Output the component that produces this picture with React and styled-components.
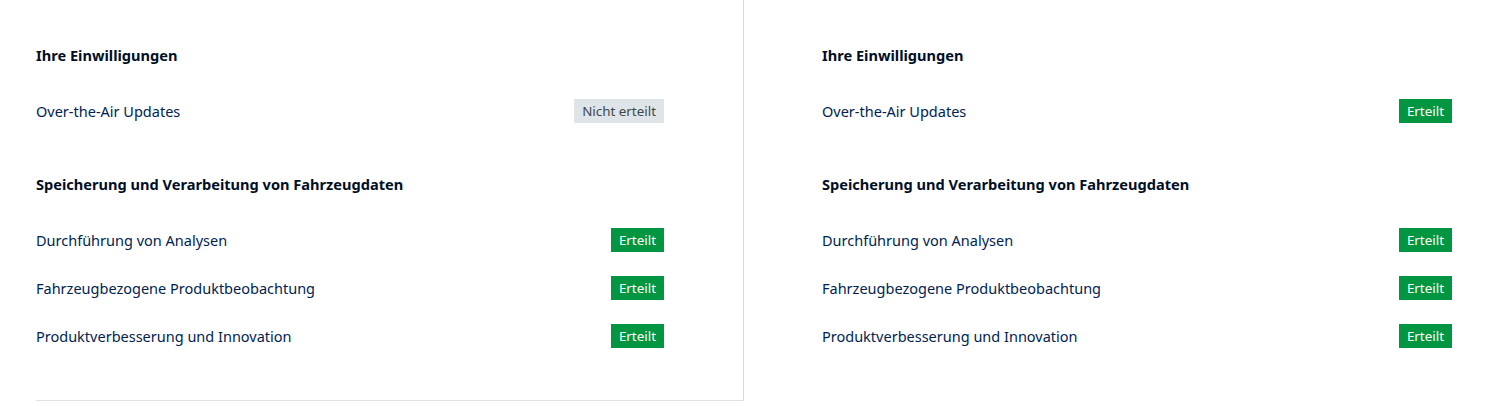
import styled, { createGlobalStyle } from 'styled-components';

const GlobalStyle = createGlobalStyle`
    body {
        margin: 0;
        background: #ffffff;
        font-family: "Noto Sans", "Open Sans", sans-serif;
        color: #001e50;
    }
`

const Page = styled.div`
    display: grid;
    grid-template-columns: 708px 708px;
    padding-left: 36px;
    height: 406px;
    box-sizing: border-box;
`

const Column = styled.div`
    padding: 39px ${props => props.$right ? '0' : '79px'} 0 ${props => props.$right ? '78px' : '0'};
    height: ${props => props.$right ? 'auto' : '401px'};
    box-sizing: border-box;
    border-right: ${props => props.$right ? 'none' : '1px solid #d7d9db'};
    border-bottom: ${props => props.$right ? 'none' : '1px solid #dfe4e8'};
`

const Section = styled.div`
    display: flex;
    flex-direction: column;
    margin-bottom: ${props => props.$gap || '0'};
`

const Heading = styled.h3`
    margin: 0 0 16px;
    font-size: 14.6px;
    line-height: 32px;
    font-weight: 700;
    color: #000e26;
`

const Row = styled.div`
    display: flex;
    justify-content: space-between;
    align-items: center;
    height: 48px;
    font-size: 14.5px;
    color: #001e50;
`

const Badge = styled.span`
    display: inline-flex;
    align-items: center;
    height: 24px;
    padding: 0 8px;
    font-size: 13.4px;
    background: ${props => props.$granted ? '#029640' : '#dfe4e8'};
    color: ${props => props.$granted ? '#ffffff' : '#3c484d'};
`

const data = [
    { title: 'Ihre Einwilligungen', rows: [['Over-the-Air Updates', null]] },
    {
        title: 'Speicherung und Verarbeitung von Fahrzeugdaten',
        rows: [
            ['Durchführung von Analysen', true],
            ['Fahrzeugbezogene Produktbeobachtung', true],
            ['Produktverbesserung und Innovation', true],
        ],
    },
]

function Consents({ otaGranted, right }) {
    return (
        <Column $right={right}>
            {data.map((section, i) => (
                <Section key={section.title} $gap={i === 0 ? '33px' : '0'}>
                    <Heading>{section.title}</Heading>
                    {section.rows.map(([label, granted]) => {
                        const ok = granted === null ? otaGranted : granted
                        return (
                            <Row key={label}>
                                {label}
                                <Badge $granted={ok}>{ok ? 'Erteilt' : 'Nicht erteilt'}</Badge>
                            </Row>
                        )
                    })}
                </Section>
            ))}
        </Column>
    )
}

export default function App() {
    return (
        <>
            <GlobalStyle />
            <Page>
                <Consents otaGranted={false} />
                <Consents otaGranted={true} right />
            </Page>
        </>
    )
}
